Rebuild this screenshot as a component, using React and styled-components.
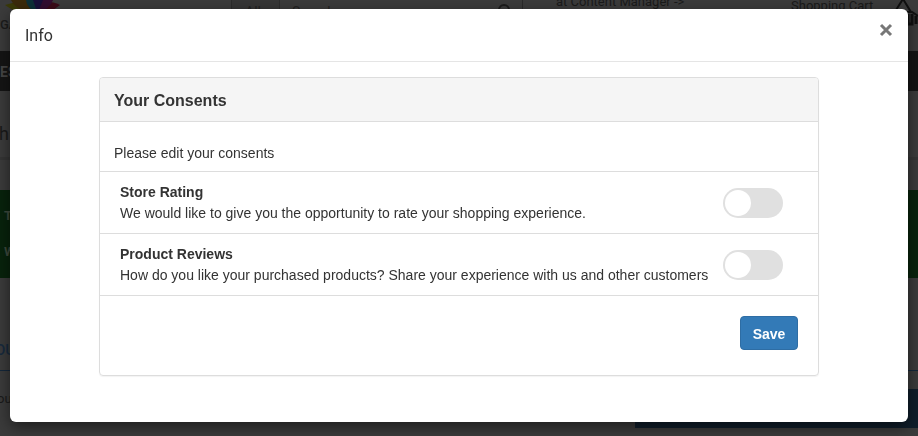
import React from "react";
import styled, { createGlobalStyle } from "styled-components";

const GlobalStyle = createGlobalStyle`
  * { box-sizing: border-box; }
  body {
    margin: 0;
    overflow: hidden;
    background: #3b3b3b;
    color: #333;
    font-family: "Liberation Sans", Arial, sans-serif;
    font-size: 14px;
    line-height: 20px;
  }
`;

const Shop = styled.div`
  height: 100vh;
  overflow: hidden;
  color: #1a1a1a;
  font-family: Roboto, sans-serif;
  white-space: nowrap;
`;

const TopBar = styled.header`
  display: grid;
  grid-template-columns: 231px 292px 33px 1fr 127px;
  height: 51px;
`;

const Brand = styled.div`
  color: #1c1c1c;
  font-size: 13px;
  font-weight: 500;
  line-height: 12px;
  text-indent: -3px;
`;

const Flower = styled.svg`
  display: block;
  width: 70px;
  height: 19px;
`;

const SearchBar = styled.div`
  display: flex;
  height: 24px;
  border-right: 1px solid #2a2a2a;
  color: #222;
  font-size: 14px;
  line-height: 24px;
`;

const Category = styled.span`
  width: 49px;
  padding-left: 13px;
  background: #363636;
  border: solid #2c2c2c;
  border-width: 0 1px;
`;

const SearchHint = styled.span`
  flex: 1;
  padding-left: 12px;
`;

const SearchIcon = styled.svg`
  width: 16px;
  height: 16px;
  margin: 3px 10px 0 0;
`;

const Notice = styled.span`
  grid-column: 4;
  font-size: 13px;
  line-height: 4px;
`;

const Cart = styled.div`
  display: flex;
  justify-content: space-between;
  font-size: 13px;
  line-height: 12px;
`;

const CartIcon = styled.svg`
  width: 24px;
  height: 28px;
`;

const NavBar = styled.nav`
  height: 40px;
  background: #151515;
  color: #454545;
  font-size: 14px;
  font-weight: 700;
  line-height: 42px;
`;

const PageTitle = styled.div`
  height: 69px;
  border-bottom: 3px solid #353535;
  font-size: 18px;
  line-height: 86px;
  text-indent: -1px;
`;

const Alert = styled.div`
  height: 88px;
  margin-top: 30px;
  padding: 8px 4px;
  background: #08230c;
  color: #3d493d;
  font-size: 13px;
  font-weight: 700;
  line-height: 36px;
`;

const Tabs = styled.div`
  height: 93px;
  padding-top: 62px;
  border-bottom: 1px solid #14273a;
  color: #172a3d;
  font-size: 15px;
  font-weight: 500;
  text-indent: -5px;
`;

const FormArea = styled.div`
  display: flex;
  justify-content: space-between;
  margin-top: 18px;
  font-size: 13px;
  text-indent: -3px;
`;

const BlueBlock = styled.div`
  width: calc(100% - 635px);
  height: 39px;
  background: #101e2b;
`;

const Overlay = styled.div`
  position: fixed;
  inset: 0;
  padding: 9px 10px;
`;

const Dialog = styled.section`
  background: #fff;
  border-radius: 6px;
  box-shadow: 0 5px 15px rgba(0, 0, 0, 0.5);
`;

const DialogHeader = styled.header`
  display: flex;
  justify-content: space-between;
  padding: 17px 15px 15px;
  border-bottom: 1px solid #e5e5e5;
`;

const DialogTitle = styled.h1`
  margin: 0;
  font-family: Roboto, sans-serif;
  font-size: 16px;
  font-weight: 400;
  line-height: 20px;
`;

const CloseButton = styled.button`
  display: block;
  width: 14px;
  height: 14px;
  margin-top: -3px;
  padding: 0;
  border: 0;
  background: none;
  cursor: pointer;

  svg { display: block; }
`;

const DialogBody = styled.div`
  padding: 15px 15px 46px;
`;

const Panel = styled.form`
  max-width: 720px;
  margin: 0 auto;
  border: 1px solid #ddd;
  border-radius: 4px;
  box-shadow: 0 1px 1px rgba(0, 0, 0, 0.05);
`;

const PanelHeading = styled.h2`
  margin: 0;
  padding: 13px 14px 10px;
  border-bottom: 1px solid #ddd;
  border-radius: 3px 3px 0 0;
  background: #f5f5f5;
  font-size: 16px;
  font-weight: 700;
  line-height: 20px;
`;

const Intro = styled.p`
  margin: 0;
  padding: 21px 14px 8px;
  font-size: 14px;
`;

const ConsentRow = styled.label`
  display: grid;
  grid-template-columns: 1fr 60px;
  gap: 8px;
  align-items: center;
  padding: 10px 35px 9px 20px;
  border-top: 1px solid #ddd;
  line-height: 21px;
  cursor: pointer;
`;

const ConsentName = styled.strong`
  display: block;
`;

const ConsentText = styled.span`
  display: block;
`;

const Switch = styled.input`
  appearance: none;
  display: block;
  width: 60px;
  height: 30px;
  margin: 0;
  padding: 2px;
  border-radius: 15px;
  background: #e0e0e0;
  cursor: pointer;

  &::before {
    content: "";
    display: block;
    width: 26px;
    height: 26px;
    border-radius: 50%;
    background: #fff;
  }

  &:checked { background: #337ab7; }
  &:checked::before { margin-left: auto; }
`;

const PanelFooter = styled.div`
  display: flex;
  justify-content: flex-end;
  padding: 20px 20px 25px;
  border-top: 1px solid #ddd;
`;

const SaveButton = styled.button`
  min-width: 58px;
  height: 34px;
  padding: 2px 11px 0;
  border: 1px solid #2e6da4;
  border-radius: 4px;
  background: #337ab7;
  color: #fff;
  font: 700 14px/20px "Liberation Sans", Arial, sans-serif;
  cursor: pointer;
`;

const consents = [
  {
    id: "store-rating",
    name: "Store Rating",
    text: "We would like to give you the opportunity to rate your shopping experience.",
  },
  {
    id: "product-reviews",
    name: "Product Reviews",
    text: "How do you like your purchased products? Share your experience with us and other customers",
  },
];

function ShopPage() {
  return (
    <Shop aria-hidden="true">
      <TopBar>
        <Brand>
          <Flower viewBox="0 0 70 19">
            <path d="M5 5 Q16 1 28 3 L33 14 Q15 13 5 5Z" fill="#3a3a08" />
            <path d="M11 0 L30 0 L36 12 Q17 12 11 0Z" fill="#3b2a0b" />
            <path d="M60 5 Q52 1 42 2 L34 14 Q51 13 60 5Z" fill="#3b0b18" />
            <path d="M26 0 H34 L37 12 Q27 9 26 0Z" fill="#0c3038" />
            <path d="M33 0 H44 Q43 8 37 12Z" fill="#17103a" />
            <path d="M43 0 H53 Q50 9 38 12Z" fill="#320d31" />
          </Flower>
          GA
        </Brand>
        <SearchBar>
          <Category>All</Category>
          <SearchHint>Search</SearchHint>
          <SearchIcon viewBox="0 0 16 16" fill="none" stroke="#1b1b1b" strokeWidth="2">
            <circle cx="8" cy="7" r="5" />
            <path d="M12 11l3 3" />
          </SearchIcon>
        </SearchBar>
        <Notice>at Content Manager -&gt;</Notice>
        <Cart>
          <span>Shopping Cart</span>
          <CartIcon viewBox="0 0 24 28" fill="none" stroke="#101010" strokeWidth="2">
            <path d="M2 10L9 -1L17 12M12 12H18L24 16" />
            <path d="M14 14V24H18V14M22 16V24" strokeWidth="3" />
          </CartIcon>
        </Cart>
      </TopBar>
      <NavBar>ES</NavBar>
      <PageTitle>h</PageTitle>
      <Alert>
        <div>T</div>
        <div>W</div>
      </Alert>
      <Tabs>OU</Tabs>
      <FormArea>
        <span>ou</span>
        <BlueBlock />
      </FormArea>
    </Shop>
  );
}

export default function App() {
  return (
    <>
      <GlobalStyle />
      <ShopPage />
      <Overlay>
        <Dialog role="dialog" aria-modal="true" aria-labelledby="dialog-title">
          <DialogHeader>
            <DialogTitle id="dialog-title">Info</DialogTitle>
            <CloseButton type="button" aria-label="Close">
              <svg width="14" height="14" viewBox="0 0 14 14" stroke="#777" strokeWidth="3">
                <path d="M2 2L12 12M12 2L2 12" />
              </svg>
            </CloseButton>
          </DialogHeader>
          <DialogBody>
            <Panel onSubmit={(event) => event.preventDefault()}>
              <PanelHeading>Your Consents</PanelHeading>
              <Intro>Please edit your consents</Intro>
              {consents.map(({ id, name, text }) => (
                <ConsentRow key={id} htmlFor={id}>
                  <span>
                    <ConsentName>{name}</ConsentName>
                    <ConsentText>{text}</ConsentText>
                  </span>
                  <Switch id={id} type="checkbox" role="switch" />
                </ConsentRow>
              ))}
              <PanelFooter>
                <SaveButton type="submit">Save</SaveButton>
              </PanelFooter>
            </Panel>
          </DialogBody>
        </Dialog>
      </Overlay>
    </>
  );
}
